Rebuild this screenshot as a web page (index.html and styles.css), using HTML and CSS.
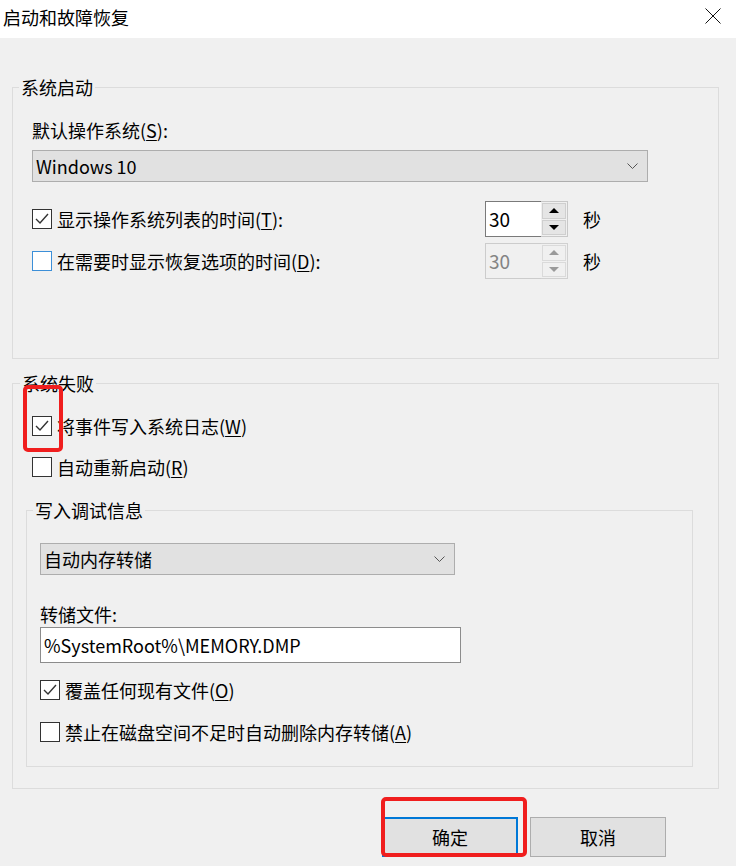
FILE: index.html
```html
<!DOCTYPE html>
<html>
<head>
	<meta charset="utf-8">
	<title>启动和故障恢复</title>
	<link rel="stylesheet" href="styles.css">
</head>
<body>
	<div class="dialog">
		<div class="titlebar">
			<span class="title">启动和故障恢复</span>
			<svg class="close" width="16" height="16" viewBox="0 0 16 16">
				<path d="M0.5 0.5 L15.5 15.5 M15.5 0.5 L0.5 15.5" stroke="#111" stroke-width="1" fill="none"/>
			</svg>
		</div>

		<div class="client">
			<!-- 系统启动 -->
			<fieldset class="group startup">
				<legend>系统启动</legend>
				<div class="label">默认操作系统(<u>S</u>):</div>
				<div class="select os-select">
					<span>Windows 10</span>
					<svg class="chevron" width="11" height="6" viewBox="0 0 11 6"><path d="M0.5 0.5 L5.5 5.5 L10.5 0.5" stroke="#555" stroke-width="1" fill="none"/></svg>
				</div>

				<div class="spin-row">
					<div class="check spin-label">
						<span class="box"><svg width="18" height="18" viewBox="0 0 18 18"><path d="M3 9 L7 13 L15 4" stroke="#333" stroke-width="1.4" fill="none"/></svg></span>
						<span>显示操作系统列表的时间(<u>T</u>):</span>
					</div>
					<div class="spin">
						<span class="spin-value">30</span>
						<span class="spin-btns">
							<span class="spin-btn"><span class="tri-up"></span></span>
							<span class="spin-btn"><span class="tri-down"></span></span>
						</span>
					</div>
					<span class="unit">秒</span>
				</div>

				<div class="spin-row second">
					<div class="check spin-label">
						<span class="box hover"></span>
						<span>在需要时显示恢复选项的时间(<u>D</u>):</span>
					</div>
					<div class="spin disabled">
						<span class="spin-value">30</span>
						<span class="spin-btns">
							<span class="spin-btn"><span class="tri-up"></span></span>
							<span class="spin-btn"><span class="tri-down"></span></span>
						</span>
					</div>
					<span class="unit">秒</span>
				</div>
			</fieldset>

			<!-- 系统失败 -->
			<fieldset class="group failure">
				<legend>系统失败</legend>
				<div class="check row-first">
					<span class="box"><svg width="18" height="18" viewBox="0 0 18 18"><path d="M3 9 L7 13 L15 4" stroke="#333" stroke-width="1.4" fill="none"/></svg></span>
					<span>将事件写入系统日志(<u>W</u>)</span>
				</div>
				<div class="check row-next">
					<span class="box"></span>
					<span>自动重新启动(<u>R</u>)</span>
				</div>

				<fieldset class="group debug">
					<legend>写入调试信息</legend>
					<div class="select dump-select">
						<span>自动内存转储</span>
						<svg class="chevron" width="11" height="6" viewBox="0 0 11 6"><path d="M0.5 0.5 L5.5 5.5 L10.5 0.5" stroke="#555" stroke-width="1" fill="none"/></svg>
					</div>
					<div class="label file-label">转储文件:</div>
					<div class="textbox">%SystemRoot%\MEMORY.DMP</div>
					<div class="check overwrite">
						<span class="box"><svg width="18" height="18" viewBox="0 0 18 18"><path d="M3 9 L7 13 L15 4" stroke="#333" stroke-width="1.4" fill="none"/></svg></span>
						<span>覆盖任何现有文件(<u>O</u>)</span>
					</div>
					<div class="check lowdisk">
						<span class="box"></span>
						<span>禁止在磁盘空间不足时自动删除内存转储(<u>A</u>)</span>
					</div>
				</fieldset>
			</fieldset>

			<div class="buttons">
				<div class="button default">确定</div>
				<div class="button">取消</div>
			</div>
		</div>

		<!-- red annotation frames -->
		<div class="mark mark-log"></div>
		<div class="mark mark-ok"></div>
	</div>
</body>
</html>
```

FILE: styles.css
```css
* {
	box-sizing: border-box;
}
body {
	margin: 0;
	overflow: hidden;
	font-family: "Noto Sans CJK SC", "Noto Sans", sans-serif;
	font-size: 18px;
	color: #000;
}
u {
	text-decoration-thickness: 1px;
	text-underline-offset: 2px;
}
.dialog {
	position: relative;
	width: 736px;
	height: 866px;
	background: #f0f0f0;
}

/* title bar */
.titlebar {
	height: 38px;
	background: #fff;
	display: flex;
	align-items: flex-start;
	justify-content: space-between;
}
.title {
	padding-left: 3px;
	padding-top: 5px;
	line-height: 24px;
}
.close {
	margin-top: 8px;
	margin-right: 15px;
}

/* group boxes */
fieldset.group {
	margin: 0;
	padding: 0;
	min-width: 0;
	border: 1px solid #dcdcdc;
}
fieldset.group legend {
	padding: 0 2px;
	line-height: 24px;
}
.client {
	padding-top: 37px;
}
.startup {
	width: 707px;
	margin-left: 12px !important;
	padding: 19px 0 79px 19px !important;
}
.startup > legend {
	margin-left: -13px;
}
.failure {
	width: 707px;
	margin: 12px 0 0 12px !important;
	padding: 19px 0 21px 13px !important;
}
.failure > legend {
	margin-left: -6px;
}
.debug {
	width: 667px;
	margin-top: 19px !important;
	padding: 21px 0 22px 13px !important;
}
.debug > legend {
	margin-left: -7px;
}

.label {
	line-height: 24px;
	height: 24px;
}

/* combo boxes */
.select {
	height: 32px;
	background: #e1e1e1;
	border: 1px solid #adadad;
	display: flex;
	align-items: center;
	justify-content: space-between;
	padding: 0 9px 0 3px;
	line-height: 30px;
}
.os-select {
	width: 616px;
	margin-top: 8px;
}
.dump-select {
	width: 415px;
}
.chevron {
	display: block;
}

/* check boxes */
.check {
	display: flex;
	align-items: center;
	height: 24px;
	line-height: 24px;
}
.check .box {
	width: 20px;
	height: 20px;
	border: 1px solid #333;
	background: #fff;
	margin-right: 5px;
	flex: none;
	display: flex;
	align-items: center;
	justify-content: center;
}
.check .box.hover {
	border-color: #3c8fd8;
}
.check .box svg {
	display: block;
}
.row-first {
	margin-left: 6px;
}
.row-next {
	margin-left: 6px;
	margin-top: 17px;
}
.file-label {
	margin-top: 27px;
}
.textbox {
	width: 421px;
	height: 36px;
	margin-top: 1px;
	background: #fff;
	border: 1px solid #8c8c8c;
	padding-left: 3px;
	line-height: 34px;
}
.overwrite {
	margin-top: 15px;
}
.lowdisk {
	margin-top: 18px;
}

/* spinners */
.spin-row {
	display: flex;
	align-items: center;
	height: 36px;
	margin-top: 19px;
}
.spin-row.second {
	margin-top: 6px;
}
.spin-label {
	width: 453px;
}
.spin {
	width: 83px;
	height: 36px;
	display: flex;
	border: 1px solid #c8c8c8;
}
.spin-value {
	width: 56px;
	background: #fff;
	border: 1px solid #7a7a7a;
	border-right: none;
	margin: -1px 0 -1px -1px;
	padding-left: 3px;
	line-height: 34px;
	font-size: 19px;
}
.spin-btns {
	flex: 1;
	display: flex;
	flex-direction: column;
	padding: 1px;
	gap: 1px;
	background: #f0f0f0;
}
.spin-btn {
	flex: 1;
	background: #e5e5e5;
	border: 1px solid #cfcfcf;
	display: flex;
	align-items: center;
	justify-content: center;
}
.tri-up {
	width: 0;
	height: 0;
	border-left: 5px solid transparent;
	border-right: 5px solid transparent;
	border-bottom: 5px solid #000;
}
.tri-down {
	width: 0;
	height: 0;
	border-left: 5px solid transparent;
	border-right: 5px solid transparent;
	border-top: 5px solid #000;
}
.spin.disabled {
	border-color: #d0d0d0;
}
.spin.disabled .spin-value {
	background: #f0f0f0;
	border-color: #cccccc;
	color: #838383;
}
.spin.disabled .spin-btn {
	background: #f0f0f0;
	border-color: #dadada;
}
.spin.disabled .tri-up {
	border-bottom-color: #9a9a9a;
}
.spin.disabled .tri-down {
	border-top-color: #9a9a9a;
}
.unit {
	margin-left: 15px;
	line-height: 24px;
}

/* buttons */
.buttons {
	display: flex;
	justify-content: flex-end;
	gap: 12px;
	margin-top: 28px;
	padding-right: 70px;
}
.button {
	width: 136px;
	height: 40px;
	background: #e1e1e1;
	border: 1px solid #adadad;
	text-align: center;
	line-height: 38px;
}
.button.default {
	border: 2px solid #0078d7;
	line-height: 36px;
}

/* annotation frames */
.mark {
	position: absolute;
	border: 4px solid #f01e1e;
	border-radius: 5px;
}
.mark-log {
	left: 23px;
	top: 385px;
	width: 40px;
	height: 67px;
}
.mark-ok {
	left: 381px;
	top: 797px;
	width: 146px;
	height: 60px;
}
```
